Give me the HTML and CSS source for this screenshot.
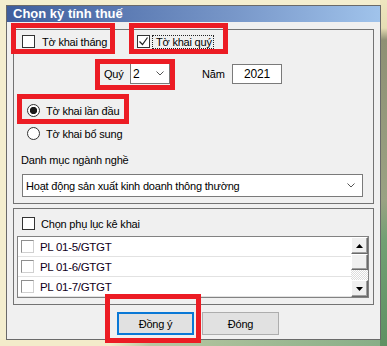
FILE: index.html
```html
<!DOCTYPE html>
<html lang="vi">
<head>
  <meta charset="UTF-8">
  <title>Chọn kỳ tính thuế</title>
  <link rel="stylesheet" href="styles.css">
</head>
<body>
  <div class="dialog">
    <div class="titlebar">Chọn kỳ tính thuế</div>
    <div class="content">
      <div class="group group-main">
        <div class="row-type">
          <label class="check item-month"><span class="box"></span>Tờ khai tháng</label>
          <label class="check item-quarter">
            <span class="box">
              <svg width="11" height="11" viewBox="0 0 11 11"><path d="M1.5 5.5 L4.5 8.5 L9.5 1.5" fill="none" stroke="#222" stroke-width="1.2"/></svg>
            </span>
            <span class="focus">Tờ khai quý</span>
          </label>
        </div>
        <div class="row-period">
          <span class="lbl-quarter">Quý</span>
          <div class="combo combo-quarter">
            <span>2</span>
            <svg class="chev" width="8" height="5" viewBox="0 0 8 5"><path d="M0.5 0.5 L4 4 L7.5 0.5" fill="none" stroke="#555" stroke-width="1"/></svg>
          </div>
          <span class="lbl-year">Năm</span>
          <div class="textbox">2021</div>
        </div>
        <label class="radio radio-first"><span class="dot on"></span>Tờ khai lần đầu</label>
        <label class="radio radio-second"><span class="dot"></span>Tờ khai bổ sung</label>
        <div class="caption">Danh mục ngành nghề</div>
        <div class="combo combo-sector">
          <span>Hoạt động sản xuất kinh doanh thông thường</span>
          <svg class="chev" width="8" height="5" viewBox="0 0 8 5"><path d="M0.5 0.5 L4 4 L7.5 0.5" fill="none" stroke="#555" stroke-width="1"/></svg>
        </div>
      </div>

      <div class="group group-annex">
        <label class="check item-annex"><span class="box"></span>Chọn phụ lục kê khai</label>
        <div class="listbox">
          <ul class="items">
            <li><span class="box flat"></span>PL 01-5/GTGT</li>
            <li><span class="box flat"></span>PL 01-6/GTGT</li>
            <li><span class="box flat"></span>PL 01-7/GTGT</li>
          </ul>
          <div class="scrollbar">
            <div class="sb-btn">
              <svg width="7" height="4" viewBox="0 0 7 4"><path d="M0 4 L3.5 0 L7 4 Z" fill="#000"/></svg>
            </div>
            <div class="sb-thumb"></div>
            <div class="sb-track"></div>
            <div class="sb-btn">
              <svg width="7" height="4" viewBox="0 0 7 4"><path d="M0 0 L7 0 L3.5 4 Z" fill="#000"/></svg>
            </div>
          </div>
        </div>
      </div>

      <div class="buttons">
        <button class="btn btn-default">Đồn<u>g</u> ý</button>
        <button class="btn">Đón<u>g</u></button>
      </div>
    </div>
  </div>

  <div class="mark mark-month"></div>
  <div class="mark mark-quarter"></div>
  <div class="mark mark-period"></div>
  <div class="mark mark-first"></div>
  <div class="mark mark-ok"></div>
</body>
</html>
```

FILE: styles.css
```css
* {
  box-sizing: border-box;
}
body {
  margin: 0;
  padding: 5px 0 0 6px;
  width: 387px;
  height: 346px;
  overflow: hidden;
  position: relative;
  font-family: "Liberation Sans", Arial, sans-serif;
  font-size: 11px;
  letter-spacing: -0.2px;
  color: #000;
  background:
    linear-gradient(to bottom, #eee5bf 0, #e6ddb4 28px, #8f9074 40px, #9aa283 200px, #72a073 240px, #5f9163 100%) right top / 7px 100% no-repeat,
    linear-gradient(to right, #f3ecca 0, #f3ecca 110px, #b9c7a2 150px, #86ad86 100%) left bottom / 100% 7px no-repeat,
    #f4eecf;
}
.dialog {
  width: 375px;
  height: 335px;
  border: 1px solid #6a6a6a;
  background: #f0f0f0;
}
.titlebar {
  height: 16px;
  padding-left: 6px;
  line-height: 16px;
  font-size: 13px;
  font-weight: bold;
  letter-spacing: 0;
  color: #fff;
  background: linear-gradient(to right, #3f5e9d, #7796c8 60%, #a0c3eb);
}
.content {
  padding: 7px 6px 0 6px;
}
.group {
  width: 361px;
  border: 1px solid #737373;
}
.group-main {
  height: 175px;
}
.group-annex {
  height: 97px;
  margin-top: 4px;
}

/* check boxes and radios */
.check {
  display: flex;
  align-items: center;
  gap: 7px;
  height: 13px;
}
.box {
  width: 13px;
  height: 13px;
  flex: none;
  border: 1px solid #333;
  background: #fff;
  display: flex;
  align-items: center;
  justify-content: center;
}
.box.flat {
  border-color: #8f8f8f #d0d0d0 #d0d0d0 #8f8f8f;
}
.row-type {
  display: flex;
  margin-top: 5px;
  padding-left: 8px;
}
.item-month {
  width: 115px;
}
.item-quarter {
  gap: 2px;
}
.focus {
  border: 1px dotted #222;
  padding: 0 1px 0 3px;
  line-height: 12px;
}
.radio {
  display: flex;
  align-items: center;
  gap: 6px;
  height: 13px;
  padding-left: 13px;
}
.radio-first {
  margin-top: 20px;
}
.radio-second {
  margin-top: 10px;
}
.dot {
  width: 13px;
  height: 13px;
  border: 1px solid #333;
  border-radius: 50%;
  background: #fff;
}
.dot.on {
  background: radial-gradient(circle, #1a1a1a 0 3.4px, #fff 3.9px);
}

/* quarter / year row */
.row-period {
  display: flex;
  align-items: center;
  height: 21px;
  margin-top: 15px;
  padding-left: 90px;
}
.lbl-quarter {
  width: 26px;
}
.lbl-year {
  width: 30px;
  margin-left: 32px;
}
.combo {
  display: flex;
  align-items: center;
  justify-content: space-between;
  border: 1px solid #7a7a7a;
  background: #fff;
}
.combo-quarter {
  width: 40px;
  height: 21px;
  padding: 0 5px 0 2px;
  font-size: 12px;
}
.textbox {
  width: 50px;
  height: 20px;
  border: 1px solid #7a7a7a;
  background: #fff;
  text-align: center;
  line-height: 18px;
  font-size: 12px;
}
.caption {
  margin-top: 13px;
  padding-left: 7px;
  line-height: 14px;
}
.combo-sector {
  width: 341px;
  height: 23px;
  margin: 7px 0 0 8px;
  padding: 0 7px 0 3px;
}

/* annex list */
.item-annex {
  margin-top: 8px;
  padding-left: 8px;
  gap: 6px;
}
.listbox {
  display: flex;
  width: 352px;
  height: 62px;
  margin: 6px 0 0 3px;
  border: 1px solid #828282;
  background: #fff;
}
.items {
  flex: 1;
  margin: 0;
  padding: 0;
  list-style: none;
}
.items li {
  display: flex;
  align-items: center;
  gap: 6px;
  height: 20px;
  padding-left: 3px;
  border-bottom: 1px solid #e2e2e2;
  font-size: 11.5px;
  letter-spacing: -0.3px;
  color: #10001a;
}
.scrollbar {
  display: flex;
  flex-direction: column;
  width: 17px;
}
.sb-btn, .sb-thumb {
  height: 17px;
  background: #f0f0f0;
  border: 1px solid;
  border-color: #fff #6a6a6a #6a6a6a #fff;
  box-shadow: inset -1px -1px #a0a0a0;
  display: flex;
  align-items: center;
  justify-content: center;
}
.sb-thumb {
  height: 16px;
}
.sb-track {
  flex: 1;
  background: repeating-conic-gradient(#fff 0 25%, #dcdcdc 0 50%) 0 0 / 2px 2px;
}

/* buttons */
.buttons {
  display: flex;
  gap: 8px;
  margin-top: 7px;
  padding-left: 104px;
}
.btn {
  width: 77px;
  height: 23px;
  padding: 0;
  font-family: inherit;
  font-size: 11px;
  letter-spacing: -0.2px;
  color: #000;
  background: #e1e1e1;
  border: 1px solid #adadad;
}
.btn-default {
  border: 2px solid #0a78d6;
}

/* red annotation frames */
.mark {
  position: absolute;
  border: 5px solid #ec1c24;
}
.mark-month {
  left: 11px;
  top: 23px;
  width: 104px;
  height: 31px;
}
.mark-quarter {
  left: 129px;
  top: 23px;
  width: 99px;
  height: 31px;
}
.mark-period {
  left: 95px;
  top: 59px;
  width: 80px;
  height: 31px;
}
.mark-first {
  left: 17px;
  top: 94px;
  width: 112px;
  height: 30px;
}
.mark-ok {
  left: 105px;
  top: 294px;
  width: 96px;
  height: 49px;
}
```
